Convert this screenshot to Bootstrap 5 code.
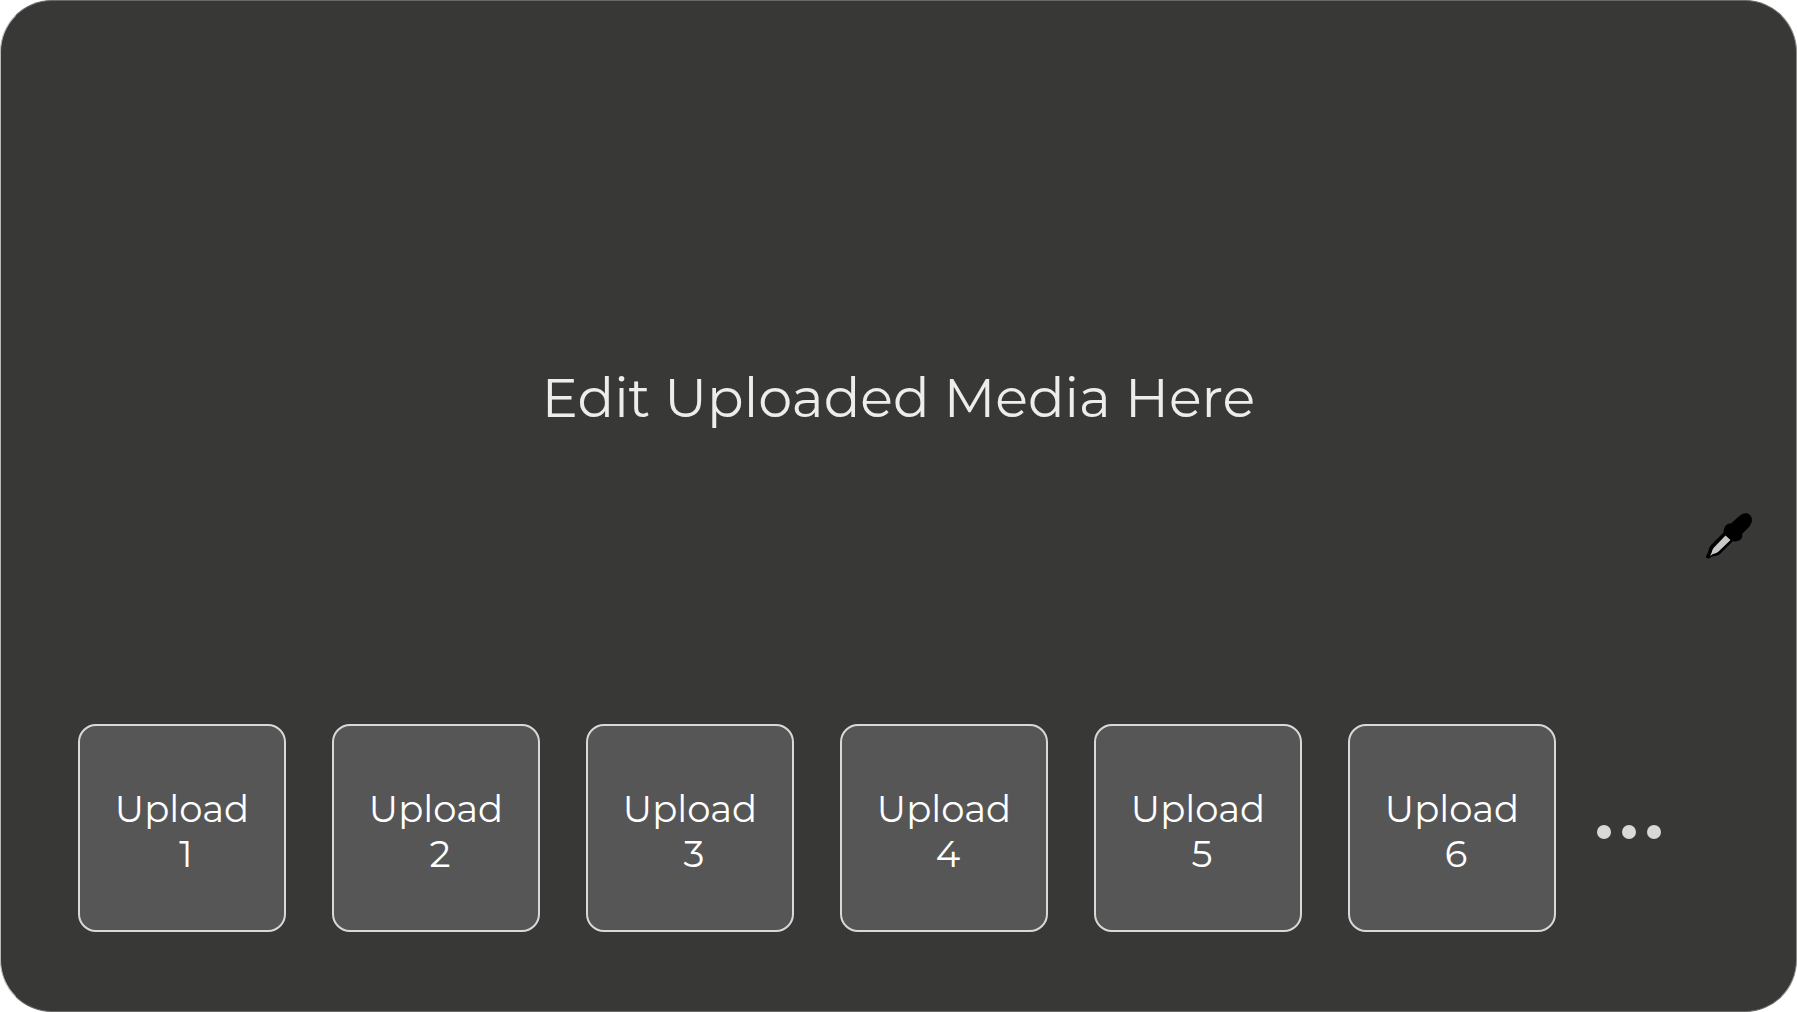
<!DOCTYPE html>
<html lang="en">
<head>
<meta charset="utf-8">
<meta name="viewport" content="width=device-width, initial-scale=1">
<title>Edit Uploaded Media</title>
<link href="https://cdn.jsdelivr.net/npm/bootstrap@5.3.0/dist/css/bootstrap.min.css" rel="stylesheet">
<style>
  body { background: #fff; font-family: Montserrat, Inter, sans-serif; font-weight: 400; }
  .editor { background: #383836; border: 1px solid #696a68; border-left-color: #b9b9b8; border-right-color: #8c8c8b; border-radius: 52px; }
  .stage-title { color: #ededed; font-size: 54px; line-height: 66px; font-weight: 400; padding-top: 70px; }
  .tray { padding: 0 135px 79px 77px; gap: 41px; }
  .tiles { gap: 46px; }
  .tile { flex: 1 1 0; min-width: 0; aspect-ratio: 1; background: #565656; border: 2px solid #d9d9d9; border-radius: 18px; color: #fff; font-size: 37px; line-height: 45px; font-weight: 400; padding: 6px 0 0; }
  .tile:hover { background: #626262; }
  .tile-number { padding-left: 8px; }
  .more { gap: 11px; }
  .dot { width: 14px; height: 14px; background: #d9d9d9; }
  .dropper { right: 43px; top: 511px; width: 48px; height: 48px; }
</style>
<script src="https://cdn.jsdelivr.net/npm/bootstrap@5.3.0/dist/js/bootstrap.bundle.min.js"></script>
</head>
<body>
<main class="editor position-relative d-flex flex-column min-vh-100 overflow-hidden">
  <section class="flex-grow-1 d-flex align-items-center justify-content-center">
    <h1 class="stage-title m-0 text-center">Edit Uploaded Media Here</h1>
  </section>
  <section class="tray d-flex align-items-center" aria-label="Uploads">
    <div class="tiles d-flex flex-grow-1">
      <button type="button" class="tile btn">Upload<span class="tile-number d-block">1</span></button>
      <button type="button" class="tile btn">Upload<span class="tile-number d-block">2</span></button>
      <button type="button" class="tile btn">Upload<span class="tile-number d-block">3</span></button>
      <button type="button" class="tile btn">Upload<span class="tile-number d-block">4</span></button>
      <button type="button" class="tile btn">Upload<span class="tile-number d-block">5</span></button>
      <button type="button" class="tile btn">Upload<span class="tile-number d-block">6</span></button>
    </div>
    <button type="button" class="more btn p-0 pt-2 border-0 rounded-0 d-flex" aria-label="More uploads">
      <span class="dot rounded-circle"></span><span class="dot rounded-circle"></span><span class="dot rounded-circle"></span>
    </button>
  </section>
  <!-- eyedropper cursor -->
  <svg class="dropper position-absolute" viewBox="0 0 48 48" aria-hidden="true">
    <path d="M19 20 6 33Q3.500 36 3.500 39L1.500 43Q0 46 3 46.500Q4 47 6 45L9 44Q13 44 15 42L29 28Z" fill="#000"/>
    <path d="M20.500 23.500 8.500 36Q7 38 6.500 41L5 44 8 42Q11 41.500 13 40L25.500 28Z" fill="#c8c8c8"/>
    <path d="M32 6C37 1 42 0 45 3C48 6 47.500 11 44 15L37 22C38 26 36 28.500 32 29Q30 30 28 29L19 21Q18 19 19 17C20 13 23 11 26 11.500Z" fill="#000"/>
  </svg>
</main>
</body>
</html>
